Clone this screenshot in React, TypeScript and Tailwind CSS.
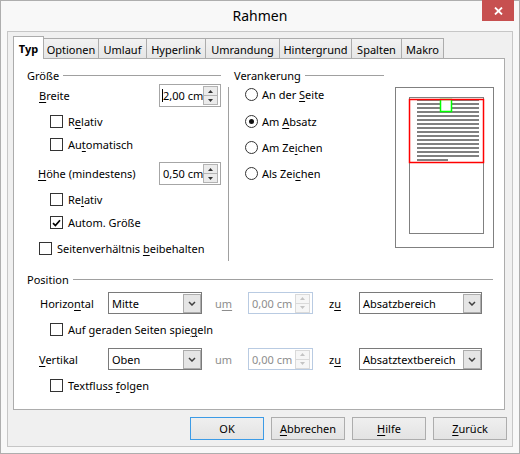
import React from "react";

type Kids = { children?: React.ReactNode };

const U = ({ children }: Kids) => (
  <span className="underline decoration-1 underline-offset-[2px]">{children}</span>
);

function Check({ checked = false }: { checked?: boolean }) {
  return (
    <span className="flex h-[13px] w-[13px] shrink-0 items-center justify-center border border-[#333333] bg-white">
      {checked && (
        <svg width="9" height="8" viewBox="0 0 9 8">
          <path d="M1 4.2 L3.4 6.6 L8 1.2" fill="none" stroke="#000" strokeWidth="1.7" />
        </svg>
      )}
    </span>
  );
}

function CheckRow({
  checked = false,
  className = "",
  children,
}: {
  checked?: boolean;
  className?: string;
  children: React.ReactNode;
}) {
  return (
    <div className={`flex h-[13px] shrink-0 items-center gap-[5px] ${className}`}>
      <Check checked={checked} />
      <span className="whitespace-nowrap">{children}</span>
    </div>
  );
}

function RadioRow({
  checked = false,
  className = "",
  children,
}: {
  checked?: boolean;
  className?: string;
  children: React.ReactNode;
}) {
  return (
    <div className={`flex h-[13px] shrink-0 items-center gap-[4px] ${className}`}>
      <span className="flex h-[13px] w-[13px] shrink-0 items-center justify-center rounded-full border border-[#333333] bg-white">
        {checked && <span className="h-[5px] w-[5px] rounded-full bg-[#111111]" />}
      </span>
      <span className="whitespace-nowrap">{children}</span>
    </div>
  );
}

function Header({ label, className = "" }: { label: string; className?: string }) {
  return (
    <div className={`flex h-[14px] shrink-0 items-center gap-[4px] ${className}`}>
      <span className="whitespace-nowrap">{label}</span>
      <span className="h-px flex-1 bg-[#a0a0a0]" />
    </div>
  );
}

function Tri({ up, color }: { up: boolean; color: string }) {
  return (
    <svg width="5" height="3" viewBox="0 0 5 3">
      <path d={up ? "M0 3 L2.5 0 L5 3 Z" : "M0 0 L2.5 3 L5 0 Z"} fill={color} />
    </svg>
  );
}

function Spin({
  value,
  disabled = false,
  caret = false,
  size,
}: {
  value: string;
  disabled?: boolean;
  caret?: boolean;
  size: string;
}) {
  const arrow = disabled ? "#c4c4c4" : "#333333";
  return (
    <div
      className={`flex shrink-0 items-center border bg-white ${
        disabled ? "border-[#b9cbe2]" : "border-[#a6a6a6]"
      } ${size}`}
    >
      <div
        className={`relative flex-1 overflow-hidden whitespace-nowrap pl-[3px] leading-[15px] ${
          disabled ? "text-[#8d8d8d]" : "text-black"
        }`}
      >
        {caret && <span className="absolute left-[2px] top-[1px] h-[13px] w-px bg-black" />}
        {value}
      </div>
      <div
        className={`mr-[2px] flex h-[19px] w-[15px] shrink-0 flex-col border ${
          disabled ? "border-[#dadada] bg-[#f6f6f6]" : "border-[#b3b3b3] bg-[#ebebeb]"
        }`}
      >
        <div className="flex flex-1 items-center justify-center">
          <Tri up color={arrow} />
        </div>
        <div
          className={`flex flex-1 items-center justify-center border-t ${
            disabled ? "border-[#dadada]" : "border-[#b3b3b3]"
          }`}
        >
          <Tri up={false} color={arrow} />
        </div>
      </div>
    </div>
  );
}

function Select({ value, size }: { value: string; size: string }) {
  return (
    <div className={`flex h-[22px] shrink-0 items-center border border-[#7a7a7a] bg-white ${size}`}>
      <span className="flex-1 whitespace-nowrap pl-[3px]">{value}</span>
      <span className="flex h-[19px] w-[18px] shrink-0 items-center justify-center self-end border border-[#acacac] bg-[#e5e5e5]">
        <svg width="8" height="5" viewBox="0 0 8 5">
          <path d="M1 1 L4 4 L7 1" fill="none" stroke="#404040" strokeWidth="1.5" />
        </svg>
      </span>
    </div>
  );
}

function Btn({ children, def = false }: { children: React.ReactNode; def?: boolean }) {
  return (
    <div
      className={`flex h-[23px] w-[74px] items-center justify-center border bg-linear-to-b from-[#efefef] to-[#e3e3e3] ${
        def ? "border-[#3c9be6]" : "border-[#adadad]"
      }`}
    >
      {children}
    </div>
  );
}

const tabs: { label: string; w: string }[] = [
  { label: "Optionen", w: "w-[56px]" },
  { label: "Umlauf", w: "w-[49px]" },
  { label: "Hyperlink", w: "w-[60px]" },
  { label: "Umrandung", w: "w-[75px]" },
  { label: "Hintergrund", w: "w-[73px]" },
  { label: "Spalten", w: "w-[51px]" },
  { label: "Makro", w: "w-[43px]" },
];

function Preview() {
  const lines = Array.from({ length: 16 }, (_, i) => i);
  return (
    <svg width="99" height="161" viewBox="0 0 99 161" className="ml-[11px] mt-[19px] shrink-0">
      <rect x="0.5" y="0.5" width="98" height="160" fill="white" stroke="#808080" />
      <rect x="14.5" y="10.5" width="74" height="136" fill="none" stroke="#808080" />
      {lines.map((i) => (
        <rect key={i} x="22" y={12 + i * 4} width={i === 15 ? 31 : 62} height="2" fill="#808080" />
      ))}
      <rect x="45.5" y="12.5" width="11" height="12" fill="white" stroke="#00ff00" strokeWidth="1.5" />
      <rect x="14.5" y="12.5" width="74" height="63" fill="none" stroke="#ff0000" strokeWidth="1.5" />
    </svg>
  );
}

export default function App() {
  return (
    <div className="flex h-[454px] w-[520px] flex-col border border-[#aeaeae] bg-[#f8f8f8] font-['Noto_Sans',sans-serif] text-[11px] leading-[15px] text-black">
      {/* title bar */}
      <div className="flex h-[30px] shrink-0 items-start">
        <div className="w-[37px] shrink-0" />
        <div className="flex h-[30px] flex-1 items-center justify-center text-[14px] leading-[18px]">
          Rahmen
        </div>
        <div className="-mt-px mr-[5px] flex h-[21px] w-[32px] shrink-0 items-center justify-center bg-[#c75050]">
          <svg width="9" height="8" viewBox="0 0 9 8">
            <path d="M1 0.5 L8 7.5 M8 0.5 L1 7.5" stroke="#ffffff" strokeWidth="1.8" />
          </svg>
        </div>
      </div>

      {/* client area */}
      <div className="mx-[6px] flex h-[416px] shrink-0 flex-col border border-[#c6c6c6] bg-[#f0f0f0]">
        {/* tabs */}
        <div className="flex h-[26px] shrink-0 items-end pl-[5px]">
          <div className="relative z-10 -mb-px flex h-[23px] w-[31px] shrink-0 items-center justify-center border border-b-0 border-[#acacac] bg-white font-bold">
            Typ
          </div>
          {tabs.map((t) => (
            <div
              key={t.label}
              className={`-ml-px flex h-[20px] shrink-0 items-center justify-center border border-b-0 border-[#acacac] bg-linear-to-b from-[#f2f2f2] to-[#e6e6e6] pt-px ${t.w}`}
            >
              {t.label}
            </div>
          ))}
        </div>

        {/* panel */}
        <div className="ml-[5px] mr-[7px] flex h-[352px] shrink-0 flex-col border border-[#acacac] bg-white pl-[13px] pr-[11px] pt-[9px]">
          <div className="flex shrink-0 items-start">
            {/* Größe */}
            <div className="flex w-[194px] shrink-0 flex-col">
              <Header label="Größe" />
              <div className="mt-[2px] flex h-[23px] items-center justify-between pl-[12px]">
                <span>
                  <U>B</U>reite
                </span>
                <Spin value="2,00 cm" caret size="h-[23px] w-[62px]" />
              </div>
              <CheckRow className="ml-[23px] mt-[8px]">
                R<U>e</U>lativ
              </CheckRow>
              <CheckRow className="ml-[23px] mt-[10px]">
                Au<U>t</U>omatisch
              </CheckRow>
              <div className="mt-[11px] flex h-[23px] items-center justify-between pl-[11px]">
                <span>
                  <U>H</U>öhe (mindestens)
                </span>
                <Spin value="0,50 cm" size="h-[23px] w-[62px]" />
              </div>
              <CheckRow className="ml-[23px] mt-[8px]">
                Re<U>l</U>ativ
              </CheckRow>
              <CheckRow checked className="ml-[23px] mt-[10px]">
                Autom. Größe
              </CheckRow>
              <CheckRow className="ml-[12px] mt-[13px]">
                Seitenverhältnis <U>b</U>eibehalten
              </CheckRow>
            </div>

            {/* separator */}
            <div className="ml-[7px] mt-[19px] h-[174px] w-px shrink-0 bg-[#a0a0a0]" />

            {/* Verankerung */}
            <div className="ml-[5px] flex w-[150px] shrink-0 flex-col">
              <Header label="Verankerung" />
              <RadioRow className="ml-[11px] mt-[6px]">
                An der <U>S</U>eite
              </RadioRow>
              <RadioRow checked className="ml-[11px] mt-[14px]">
                Am <U>A</U>bsatz
              </RadioRow>
              <RadioRow className="ml-[11px] mt-[13px]">
                Am Ze<U>i</U>chen
              </RadioRow>
              <RadioRow className="ml-[11px] mt-[13px]">
                Als Zei<U>c</U>hen
              </RadioRow>
            </div>

            <Preview />
          </div>

          {/* Position */}
          <Header label="Position" className="mt-[11px]" />
          <div className="mt-[6px] flex h-[22px] shrink-0 items-center pl-[13px]">
            <span className="w-[68px] shrink-0">
              Horizo<U>n</U>tal
            </span>
            <Select value="Mitte" size="w-[94px]" />
            <span className="ml-[13px] w-[33px] shrink-0 text-[#8d8d8d]">
              u<U>m</U>
            </span>
            <Spin value="0,00 cm" disabled size="h-[22px] w-[65px]" />
            <span className="ml-[16px] w-[30px] shrink-0">
              z<U>u</U>
            </span>
            <Select value="Absatzbereich" size="w-[123px]" />
          </div>
          <CheckRow className="ml-[23px] mt-[9px]">
            Auf geraden Seiten spie<U>g</U>eln
          </CheckRow>
          <div className="mt-[12px] flex h-[22px] shrink-0 items-center pl-[12px]">
            <span className="w-[69px] shrink-0">
              <U>V</U>ertikal
            </span>
            <Select value="Oben" size="w-[94px]" />
            <span className="ml-[13px] w-[33px] shrink-0 text-[#8d8d8d]">um</span>
            <Spin value="0,00 cm" disabled size="h-[22px] w-[65px]" />
            <span className="ml-[16px] w-[30px] shrink-0">
              z<U>u</U>
            </span>
            <Select value="Absatztextbereich" size="w-[123px]" />
          </div>
          <CheckRow className="ml-[23px] mt-[9px]">
            Textfluss <U>f</U>olgen
          </CheckRow>
        </div>

        {/* buttons */}
        <div className="mt-[7px] flex shrink-0 justify-end gap-[7px] pr-[5px]">
          <Btn def>OK</Btn>
          <Btn>
            <U>A</U>bbrechen
          </Btn>
          <Btn>
            <U>H</U>ilfe
          </Btn>
          <Btn>
            <U>Z</U>urück
          </Btn>
        </div>
      </div>
    </div>
  );
}
